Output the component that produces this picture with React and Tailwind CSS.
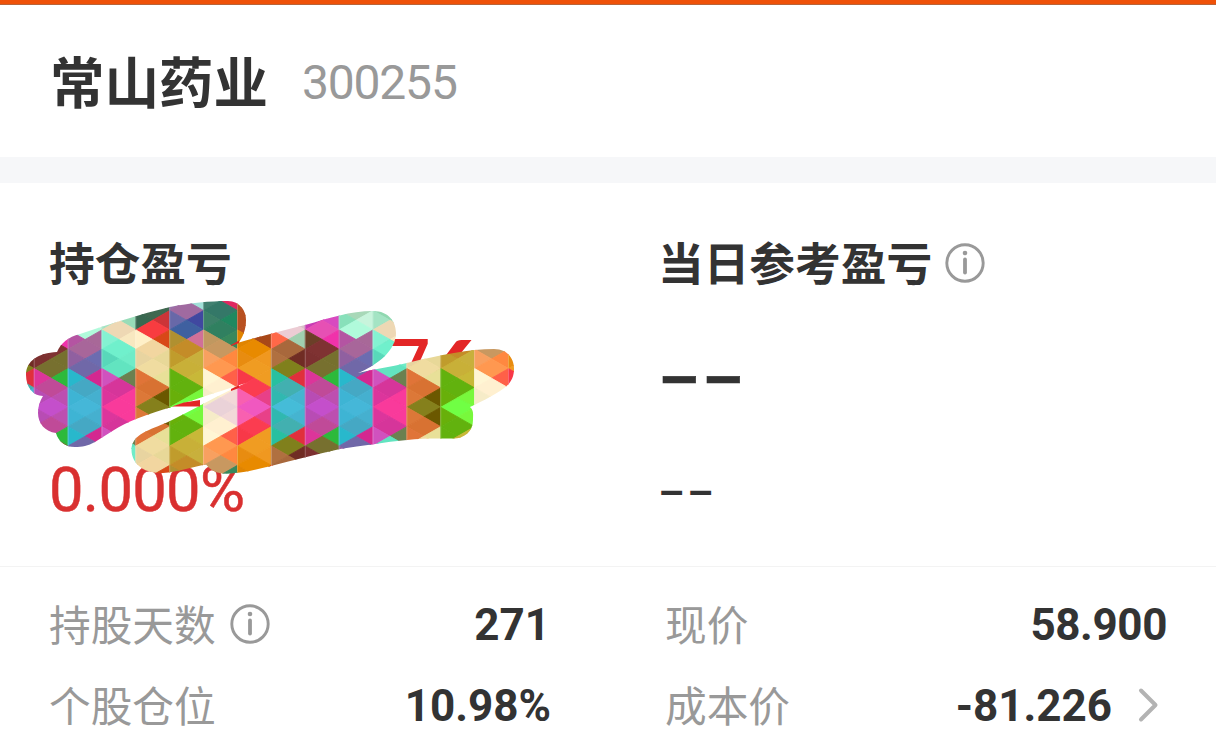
import React from "react";

const CJK = "font-['Noto_Sans_CJK_SC',sans-serif]";
const NUM = "font-['Roboto','Noto_Sans_CJK_SC',sans-serif]";

// Geometry of the mosaic: vertical strips cut by a triangular lattice.
const X0 = 34.2;
const W = 33.88;
const Y0 = 407.3;
const STEP = 19.35;

// Each strip lists, from its centre outwards, the colours of
// d: diamonds, l: left edge triangles, r: right edge triangles.
const STRIPS = [
  {
    d: ["c44fcb", "c04a98", "77702f", "7f3232", "e650b4", "c848c4"],
    l: ["b84cb4", "dc359a", "7c3030", "6b3f28", "c83cb4", "d8d8d8"],
    r: ["bd4fb0", "2db93b", "76702e", "f032aa", "d84ac0", "a0e0c0"],
  },
  {
    d: ["45b7d8", "45a8c4", "7068a8", "a8669a", "b0fadb", "a8d8b8"],
    l: ["3eb4d4", "28b8cc", "9060a0", "b454a2", "88e0ba", "b8e8d0"],
    r: ["45b0cf", "d42890", "6c6cb0", "a86898", "c8f4dc", "b8f0d8"],
  },
  {
    d: ["f93a9b", "d6359a", "62e4c0", "70f0cc", "eed8b4", "90d8b0"],
    l: ["dc359c", "d052be", "58d8ba", "84f2d2", "a4e4c4", "a0dcb8"],
    r: ["f93a9b", "6b8050", "6fecc8", "f8e8c0", "98dcb8", "90d8b0"],
  },
  {
    d: ["85801c", "d87232", "f0dca0", "f2d6a0", "f83c40", "3f6850"],
    l: ["dc7838", "e07438", "e8d4a0", "fff0c8", "386850", "80d0b0"],
    r: ["6b5800", "e8e098", "e8d898", "d84818", "cc3438", "406850"],
  },
  {
    d: ["70ff44", "62b20e", "c8b038", "c48c28", "3f60a0", "a06aa0"],
    l: ["68b00a", "62b20e", "c09c2c", "b09030", "6868a8", "9870a8"],
    r: ["78f83c", "c8b838", "c8b03c", "d07098", "4048a0", "a0e0d8"],
  },
  {
    d: ["ead2d8", "fff0d0", "ff9850", "c89860", "308060", "347868"],
    l: ["f6ecc8", "fff6d4", "f8a060", "c09860", "3c8068", "408070"],
    r: ["f2d8d8", "ff6048", "ff8840", "38885c", "208860", "e02860"],
  },
  {
    d: ["f058c0", "fb3c50", "f09c22", "e88a00", "b85020", "b85020"],
    l: ["f860b0", "f83848", "e88c10", "e08400", "b85020", "b85020"],
    r: ["e84088", "f09c22", "f09820", "a84818", "a84818", "a84818"],
  },
  {
    d: ["45bcd8", "42b0b0", "80801c", "a8683c", "ecccd4", "d8d8d8"],
    l: ["30b8b0", "28c0a0", "b07040", "ff6848", "f0a090", "d8d8d8"],
    r: ["45b4d0", "e0303c", "702c24", "a0d0b0", "d8c0c8", "d8d8d8"],
  },
];

function Mosaic() {
  const cells = [];
  const add = (key, points, color) =>
    cells.push(
      <polygon key={key} points={points} fill={`#${color}`} stroke={`#${color}`} strokeWidth="0.9" strokeLinejoin="round" />
    );
  for (let c = -1; c < 15; c++) {
    const s = STRIPS[(c + 8) % 8];
    const a = X0 + c * W;
    const m = a + W / 2;
    const b = a + W;
    for (let k = -6; k <= 5; k++) {
      const y = Y0 + k * STEP;
      const half = STEP / 2;
      const di = Math.min(Math.abs(k), 5);
      const ti = Math.min(k >= 0 ? k : -k - 1, 5);
      add(`d${c}.${k}`, `${a},${y} ${m},${y - half} ${b},${y} ${m},${y + half}`, s.d[di]);
      add(`l${c}.${k}`, `${a},${y} ${m},${y + half} ${a},${y + STEP}`, s.l[ti]);
      add(`r${c}.${k}`, `${b},${y} ${m},${y + half} ${b},${y + STEP}`, s.r[ti]);
    }
    cells.push(
      <line key={`e${c}`} x1={a} x2={a} y1="290" y2="480" stroke="#fff" strokeOpacity="0.3" strokeWidth="0.8" />
    );
  }
  return (
    <svg className="absolute left-0 top-0" width="608" height="383" viewBox="0 183 608 383">
      <clipPath id="brush">
        <path d="M26 375C26 361 38 353 57 352C61 343 68 337 80 334C110 324 140 314 170 307C190 303 210 301 228 301C240 301 246 311 246 320C246 330 243 336 239 342.500C262 336 285 330 305 325C330 318 350 311 373 311C389 311 396 322 396 333C396 350 378 365 358 373C375 369 390 367 407 363C440 355 470 349 494 349C508 349 514 359 514 369C514 380 508 386 500 391C491 397 480 402 470 407C474 411 473 414 473 420C473 431 465 438.500 453 438.500C438 438.500 422 438 407 440C385 442 362 446 340 449C317 454 294 460 271 466C258 469 246 472 235 473C222 475 213 473 206 464.500C192 467 178 472 163 473C145 474 131.500 464 131.500 450C131.500 434 150 430 168 422C190 412 220 393 248 382.500C226 389 200 398 178 405C162 410 148 414 136 419C120 425 105 436 95 442C88 446 82 447 75 447C65 447 58 441 56 433C45 432 38 423 38 413C38 406 40 401 43 396C33 396 26 387 26 375Z" />
      </clipPath>
      <g clipPath="url(#brush)">{cells}</g>
      <path d="M172 406.500L184 402.500L200 400V406.500Z M231 389L239 385V388L231 391Z M231 345L239 340.500V343L231 346Z" fill="#e32626" />
    </svg>
  );
}

function Info() {
  return (
    <svg width="40" height="40" viewBox="0 0 40 40" fill="none" stroke="#999">
      <circle cx="20" cy="20" r="18.2" strokeWidth="2.9" />
      <path d="M20 16.500V29.500" strokeWidth="3.8" strokeLinecap="round" />
      <circle cx="20" cy="10" r="2.3" fill="#999" stroke="none" />
    </svg>
  );
}

function Label({ children }) {
  return <span className={`${CJK} -mt-[5px] text-[41.7px] leading-[60px] text-[#999]`}>{children}</span>;
}

function Value({ children }) {
  return <span className={`${NUM} text-[44px] font-bold leading-[60px] text-[#333]`}>{children}</span>;
}

export default function App() {
  return (
    <main className={`h-[733px] w-[1216px] overflow-hidden bg-white text-[#333] ${CJK}`}>
      <div className="h-[5px] border-b border-[#b8643a] bg-[#ef5108]" />
      <header className="flex h-[152px] items-center pl-[50px]">
        <h1 className="-mt-[3px] text-[54.5px] font-bold leading-[80px]">常山药业</h1>
        <span className={`${NUM} ml-[34px] mt-[3px] text-[48px] leading-[80px] tracking-[-1.2px] text-[#999]`}>300255</span>
      </header>
      <div className="h-[26px] bg-[#f6f7f9]" />

      <section className="relative grid h-[383px] grid-cols-[608px_608px]">
        <div className="flex flex-col pl-[49px] pt-[48px]">
          <h2 className="text-[45.7px] font-bold leading-[60px]">持仓盈亏</h2>
          <div className={`${NUM} mt-[33px] flex h-[100px] pl-[331px] text-[92px] leading-[100px] text-[#e32626]`}>
            <span>7</span>
            <span className="-ml-[4px] -mt-[2px] font-['Lato',sans-serif] font-bold">6</span>
          </div>
          <div className={`${NUM} mt-[26px] text-[61.5px] leading-[80px] tracking-[-0.7px] text-[#d93030] [-webkit-text-stroke:0.5px_#d93030]`}>0.000%</div>
        </div>
        <div className="flex flex-col pl-[50px] pt-[48px]">
          <div className="flex items-center">
            <h2 className="text-[45.7px] font-bold leading-[60px]">当日参考盈亏</h2>
            <span className="ml-[13px] mt-[4px]"><Info /></span>
          </div>
          <div className="mt-[35px] h-[100px] pl-[3px] font-['Liberation_Sans',sans-serif] text-[66px] font-bold leading-[98px] tracking-[7.3px] [-webkit-text-stroke:0.6px_#333]">––</div>
          <div className="mt-[24px] pl-[2px] font-['Liberation_Sans',sans-serif] text-[42px] font-bold leading-[80px] tracking-[5.6px]">––</div>
        </div>
        <Mosaic />
      </section>

      <section className="grid grid-cols-[608px_608px] border-t border-[#f3f3f3] pt-[28px]">
        <div className="flex flex-col gap-[21px] pl-[49px] pr-[57px]">
          <div className="flex h-[60px] items-center justify-between pr-[1px]">
            <div className="flex items-center gap-[14px]">
              <Label>持股天数</Label>
              <span className="-mt-[3px]"><Info /></span>
            </div>
            <Value>271</Value>
          </div>
          <div className="flex h-[60px] items-center justify-between">
            <Label>个股仓位</Label>
            <Value>10.98%</Value>
          </div>
        </div>
        <div className="flex flex-col gap-[21px] pl-[57px] pr-[49px]">
          <div className="flex h-[60px] items-center justify-between">
            <Label>现价</Label>
            <span className="tracking-[-0.4px]"><Value>58.900</Value></span>
          </div>
          <div className="flex h-[60px] items-center justify-between">
            <Label>成本价</Label>
            <div className="flex items-center gap-[25px]">
              <Value>-81.226</Value>
              <svg className="mr-[7px] -mt-[2px]" width="23" height="36" viewBox="0 0 23 36" fill="none" stroke="#b3b3b3" strokeWidth="4" strokeLinecap="round" strokeLinejoin="round">
                <path d="M4 3.500L18.500 18L4 32.500" />
              </svg>
            </div>
          </div>
        </div>
      </section>
    </main>
  );
}
